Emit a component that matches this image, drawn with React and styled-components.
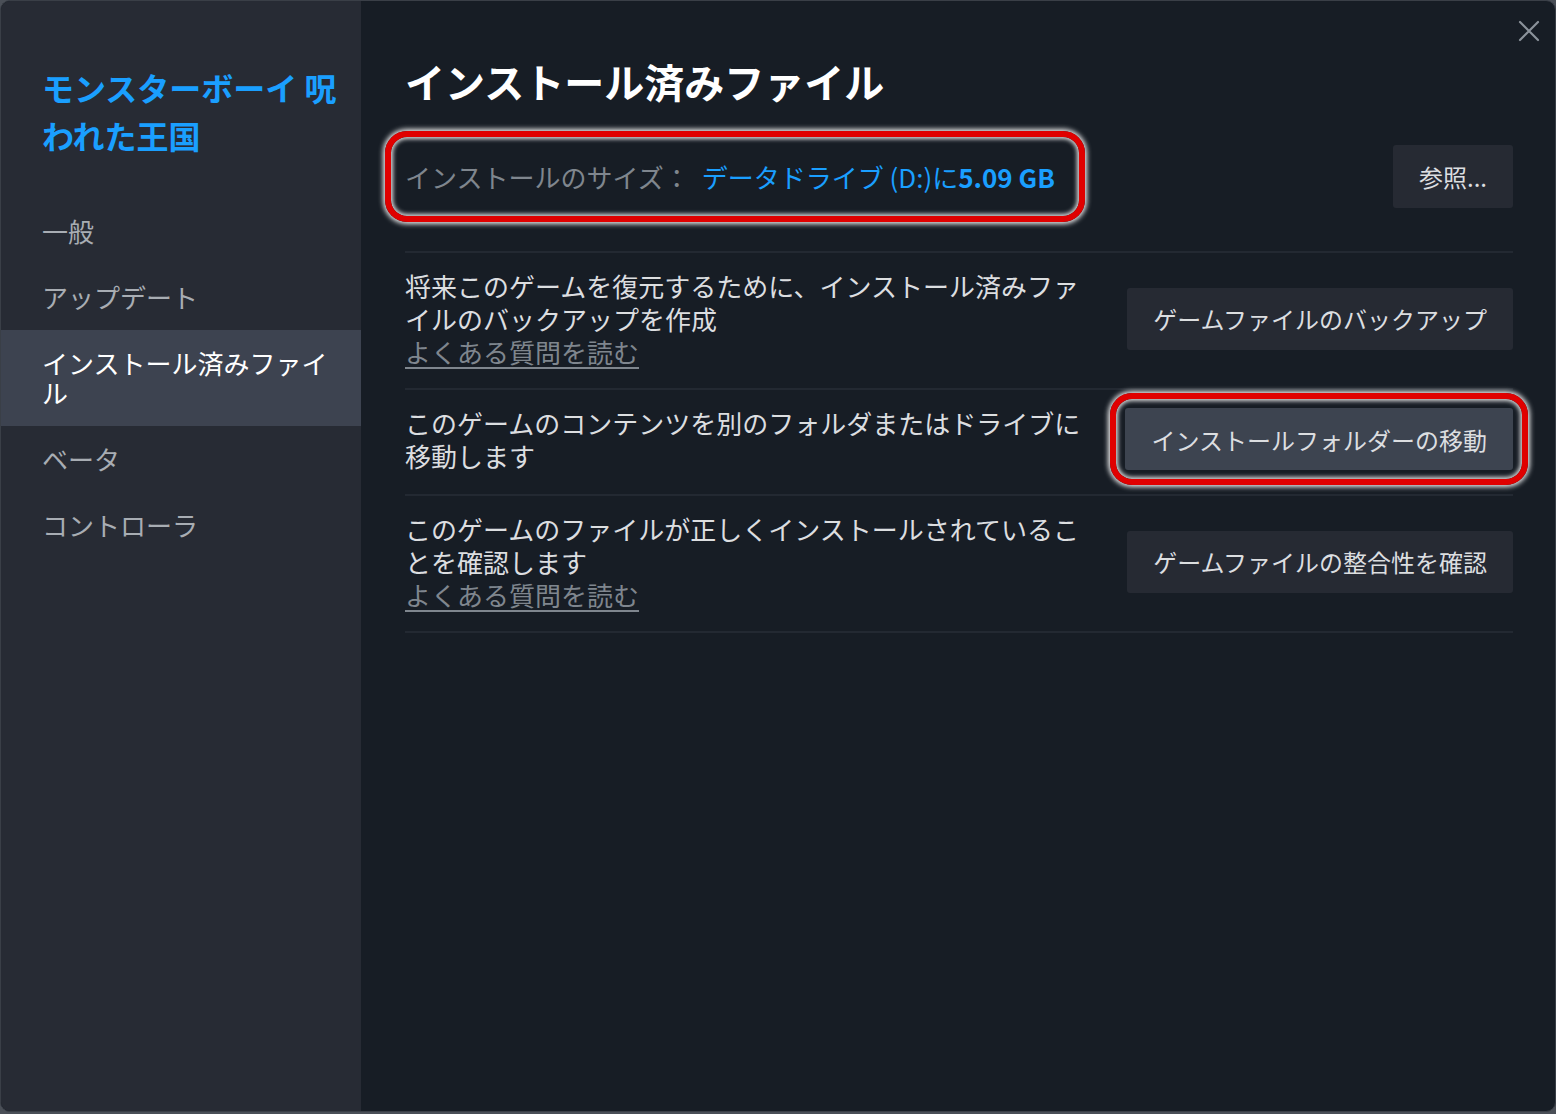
import styled, { createGlobalStyle } from 'styled-components';

const GlobalStyle = createGlobalStyle`
  html, body {
    margin: 0;
    padding: 0;
    background: #4a4f57;
  }
  body {
    font-family: "Noto Sans CJK JP", "Noto Sans", sans-serif;
    -webkit-font-smoothing: antialiased;
  }
  * {
    box-sizing: border-box;
  }
`;

const Window = styled.div`
  width: 1556px;
  height: 1112px;
  display: flex;
  border: 1px solid #3a3f47;
  border-radius: 10px;
  overflow: hidden;
  position: relative;
  background: #171d25;
`;

const Sidebar = styled.aside`
  width: 360px;
  flex-shrink: 0;
  background: #272b34;
  padding-top: 62px;
  display: flex;
  flex-direction: column;
`;

const GameTitle = styled.h1`
  margin: 0 0 39px;
  padding: 0 12px 0 41px;
  font-size: 32px;
  line-height: 48px;
  font-weight: 700;
  color: #1a9fff;
`;

const NavItem = styled.div`
  padding: 18px 30px 18px 41px;
  font-size: 26px;
  line-height: 30px;
  color: ${(p) => (p.$active ? '#ffffff' : '#a8adb3')};
  background: ${(p) => (p.$active ? '#3d4350' : 'transparent')};
`;

const Main = styled.main`
  flex: 1;
  padding: 56px 42px 0 44px;
  display: flex;
  flex-direction: column;
`;

const CloseButton = styled.button`
  position: absolute;
  top: 16px;
  right: 12px;
  width: 28px;
  height: 28px;
  padding: 0;
  border: none;
  background: none;
  display: flex;
  align-items: center;
  justify-content: center;
  cursor: pointer;
`;

const Heading = styled.h2`
  margin: 0 0 26px;
  font-size: 40px;
  line-height: 48px;
  font-weight: 700;
  color: #ffffff;
`;

const SizeRow = styled.div`
  display: flex;
  align-items: center;
  justify-content: space-between;
  padding-bottom: 29px;
  border-bottom: 2px solid #232932;
`;

const Highlight = styled.div`
  margin-left: -20px;
  padding: 20px 24px 20px 14px;
  border: 6px solid #e00000;
  border-radius: 22px;
  box-shadow: 0 0 5px 2px rgba(255, 255, 255, 0.9),
    inset 0 0 4px 2px rgba(255, 255, 255, 0.85);
`;

const SizeText = styled.div`
  font-size: 26px;
  line-height: 39px;
  white-space: nowrap;
  color: #7f868e;
`;

const SizeValue = styled.span`
  color: #1a9fff;
  margin-left: 12px;
`;

const Strong = styled.span`
  font-weight: 700;
`;

const Button = styled.button`
  position: relative;
  flex-shrink: 0;
  height: 62px;
  padding: 0 26px;
  border: none;
  border-radius: 3px;
  font-family: inherit;
  font-size: 24px;
  color: #dcdee0;
  background: ${(p) => (p.$focused ? '#3d4450' : '#262a33')};
  white-space: nowrap;
  cursor: pointer;

  ${(p) =>
    p.$focused &&
    `
    &::after {
      content: '';
      position: absolute;
      inset: -15px;
      border: 6px solid #e00000;
      border-radius: 22px;
      box-shadow: 0 0 5px 2px rgba(255, 255, 255, 0.9),
        inset 0 0 4px 2px rgba(255, 255, 255, 0.85);
      pointer-events: none;
    }
  `}
`;

const BrowseButton = styled(Button)`
  height: 63px;
`;

const ActionRow = styled.div`
  display: flex;
  align-items: center;
  justify-content: space-between;
  gap: 24px;
  padding: 16px 0 ${(p) => (p.$tall ? '22px' : '20px')};
  border-bottom: 2px solid #232932;
`;

const Description = styled.div`
  width: 680px;
  font-size: 26px;
  line-height: 33px;
  color: #dcdee0;
`;

const FaqLink = styled.a`
  display: block;
  width: fit-content;
  height: 33px;
  color: #7f868e;
  text-decoration: underline;
  text-underline-offset: 4px;
  cursor: pointer;
`;

const navItems = ['一般', 'アップデート', 'インストール済みファイル', 'ベータ', 'コントローラ'];

const actions = [
  {
    text: '将来このゲームを復元するために、インストール済みファイルのバックアップを作成',
    faq: true,
    button: 'ゲームファイルのバックアップ',
  },
  {
    text: 'このゲームのコンテンツを別のフォルダまたはドライブに移動します',
    faq: false,
    button: 'インストールフォルダーの移動',
    focused: true,
  },
  {
    text: 'このゲームのファイルが正しくインストールされていることを確認します',
    faq: true,
    button: 'ゲームファイルの整合性を確認',
  },
];

export default function App() {
  return (
    <>
      <GlobalStyle />
      <Window>
        <Sidebar>
          <GameTitle>モンスターボーイ 呪われた王国</GameTitle>
          {navItems.map((item) => (
            <NavItem key={item} $active={item === 'インストール済みファイル'}>
              {item}
            </NavItem>
          ))}
        </Sidebar>

        <Main>
          <Heading>インストール済みファイル</Heading>

          <SizeRow>
            <Highlight>
              <SizeText>
                インストールのサイズ：
                <SizeValue>
                  データドライブ (D:)に<Strong>5.09 GB</Strong>
                </SizeValue>
              </SizeText>
            </Highlight>
            <BrowseButton>参照...</BrowseButton>
          </SizeRow>

          {actions.map((a) => (
            <ActionRow key={a.button} $tall={a.focused}>
              <Description>
                {a.text}
                {a.faq && <FaqLink>よくある質問を読む</FaqLink>}
              </Description>
              <Button $focused={a.focused}>{a.button}</Button>
            </ActionRow>
          ))}
        </Main>

        <CloseButton aria-label="閉じる">
          <svg width="22" height="22" viewBox="0 0 22 22">
            <path d="M2 2 L20 20 M20 2 L2 20" stroke="#8b929a" strokeWidth="2.2" strokeLinecap="round" />
          </svg>
        </CloseButton>
      </Window>
    </>
  );
}
